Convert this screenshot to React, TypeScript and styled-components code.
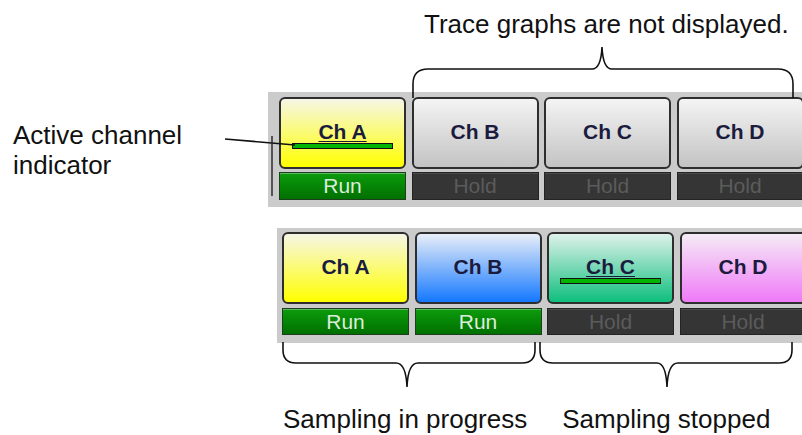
import React from 'react'
import styled, { createGlobalStyle } from 'styled-components'

const GlobalStyle = createGlobalStyle`
  html, body {
    margin: 0;
    padding: 0;
    background: #ffffff;
  }
  body {
    font-family: 'Liberation Sans', Arial, sans-serif;
  }
`

type Tone = 'gray' | 'yellow' | 'blue' | 'green' | 'pink'

const toneGradients: Record<Tone, string> = {
  gray: 'linear-gradient(#f4f4f4, #c3c3c3)',
  yellow: 'linear-gradient(#f6f6e6, #ffff00)',
  blue: 'linear-gradient(#e8eef8, #1478ff)',
  green: 'linear-gradient(#def1ea, #0fbf7e)',
  pink: 'linear-gradient(#f5ebf5, #ef7af8)',
}

const Canvas = styled.div`
  position: relative;
  width: 802px;
  height: 435px;
  overflow: hidden;
  background: #ffffff;
  display: flex;
  flex-direction: column;
  color: #111111;
`
const Caption = styled.div`
  font-size: 26px;
  line-height: 30px;
  white-space: nowrap;
`
const TopCaption = styled(Caption)`
  margin-top: 9px;
  padding-left: 424px;
`
const FirstRow = styled.div`
  display: flex;
  margin-top: 53px;
`
const SideLabel = styled(Caption)`
  width: 268px;
  flex-shrink: 0;
  box-sizing: border-box;
  padding: 28px 0 0 13px;
  white-space: normal;
`
const Panel = styled.div<{ $padLeft: number; $padTop: number; $gapY: number; $bar: number }>`
  flex: 1;
  height: 115px;
  box-sizing: border-box;
  background: #cbcbcb;
  padding: ${(p) => p.$padTop}px 0 0 ${(p) => p.$padLeft}px;
  display: grid;
  grid-template-columns: repeat(4, 127px);
  grid-template-rows: 72px ${(p) => p.$bar}px;
  column-gap: 5.5px;
  row-gap: ${(p) => p.$gapY}px;
  overflow: hidden;
`
const SecondRow = styled.div`
  display: flex;
  margin: 21px 0 0 277px;
`
const ChannelButton = styled.div<{ $tone: Tone }>`
  box-sizing: border-box;
  border: 2px solid #2e2e2e;
  border-radius: 6px;
  background: ${(p) => toneGradients[p.$tone]};
  display: flex;
  flex-direction: column;
  align-items: center;
  padding-top: 21px;
`
const ChannelName = styled.span<{ $active: boolean }>`
  font-size: 21px;
  line-height: 24px;
  font-weight: bold;
  color: #1b1b3e;
  text-decoration: ${(p) => (p.$active ? 'underline' : 'none')};
  text-decoration-thickness: 1px;
  text-underline-offset: 2px;
`
const Indicator = styled.div<{ $show: boolean }>`
  width: 101px;
  height: 6px;
  margin-top: -1px;
  box-sizing: border-box;
  border: 1px solid #111111;
  background: #00b400;
  visibility: ${(p) => (p.$show ? 'visible' : 'hidden')};
`
const StatusBar = styled.div<{ $running: boolean }>`
  box-sizing: border-box;
  border: 1px solid ${(p) => (p.$running ? '#1d3f1d' : '#242424')};
  background: ${(p) =>
    p.$running ? 'linear-gradient(#0c9c0c, #007000)' : '#353535'};
  box-shadow: inset 0 1px 0 ${(p) => (p.$running ? '#5fb85f' : '#4a4a4a')};
  color: ${(p) => (p.$running ? '#dcecdc' : '#5b5b5b')};
  font-size: 21px;
  display: flex;
  align-items: center;
  justify-content: center;
`
const BottomCaptions = styled.div`
  display: flex;
  gap: 35px;
  margin-top: 61px;
  padding-left: 283px;
`
const Overlay = styled.svg`
  position: absolute;
  left: 0;
  top: 0;
  pointer-events: none;
`

type Channel = { name: string; tone: Tone; running: boolean; active: boolean }

const firstSet: Channel[] = [
  { name: 'Ch A', tone: 'yellow', running: true, active: true },
  { name: 'Ch B', tone: 'gray', running: false, active: false },
  { name: 'Ch C', tone: 'gray', running: false, active: false },
  { name: 'Ch D', tone: 'gray', running: false, active: false },
]
const secondSet: Channel[] = [
  { name: 'Ch A', tone: 'yellow', running: true, active: false },
  { name: 'Ch B', tone: 'blue', running: true, active: false },
  { name: 'Ch C', tone: 'green', running: false, active: true },
  { name: 'Ch D', tone: 'pink', running: false, active: false },
]

const ChannelPanel: React.FC<{
  channels: Channel[]
  padLeft: number
  padTop: number
  gapY: number
  bar: number
}> = ({ channels, padLeft, padTop, gapY, bar }) => (
  <Panel $padLeft={padLeft} $padTop={padTop} $gapY={gapY} $bar={bar}>
    {channels.map((ch) => (
      <ChannelButton key={ch.name} $tone={ch.tone}>
        <ChannelName $active={ch.active}>{ch.name}</ChannelName>
        <Indicator $show={ch.active} />
      </ChannelButton>
    ))}
    {channels.map((ch) => (
      <StatusBar key={ch.name + '-s'} $running={ch.running}>
        {ch.running ? 'Run' : 'Hold'}
      </StatusBar>
    ))}
  </Panel>
)

const App: React.FC = () => {
  return (
    <>
      <GlobalStyle />
      <Canvas>
        <TopCaption>Trace graphs are not displayed.</TopCaption>
        <FirstRow>
          <SideLabel>
            Active channel
            <br />
            indicator
          </SideLabel>
          <ChannelPanel channels={firstSet} padLeft={11} padTop={5} gapY={3} bar={28} />
        </FirstRow>
        <SecondRow>
          <ChannelPanel channels={secondSet} padLeft={5} padTop={4} gapY={4} bar={27} />
        </SecondRow>
        <BottomCaptions>
          <Caption>Sampling in progress</Caption>
          <Caption>Sampling stopped</Caption>
        </BottomCaptions>
        <Overlay width="802" height="435" viewBox="0 0 802 435">
          <g fill="none" stroke="#111111" strokeWidth="1.6">
            <path d="M225 139 L295 145" />
            <path d="M272 136 V196" stroke="#222222" strokeWidth="1.4" />
            <path d="M413 98 V84 Q413 69 428 69 H592 Q601 69 602 47 Q603 69 612 69 H778 Q793 69 793 84 V98" />
            <path d="M283 342 V350 Q283 363 296 363 H396 Q406 363 407 387 Q408 363 418 363 H522 Q535 363 535 350 V342" />
            <path d="M540 342 V350 Q540 363 553 363 H657 Q666 363 667 387 Q668 363 678 363 H779 Q792 363 792 350 V342" />
          </g>
        </Overlay>
      </Canvas>
    </>
  )
}

export default App
